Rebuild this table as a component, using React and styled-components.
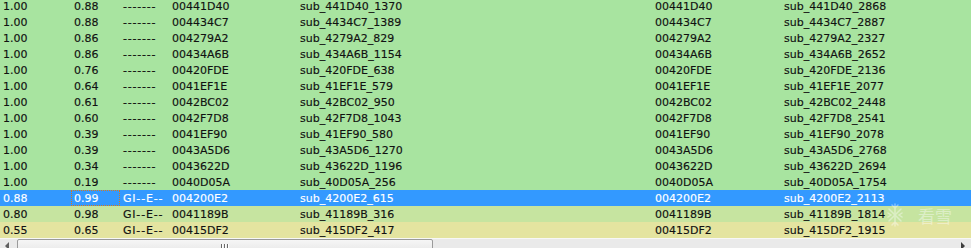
import React from 'react';
import styled, { createGlobalStyle } from 'styled-components';

const rows = [
  ['1.00', '0.88', '-------', '00441D40', 'sub_441D40_1370', 'sub_441D40_2868'],
  ['1.00', '0.88', '-------', '004434C7', 'sub_4434C7_1389', 'sub_4434C7_2887'],
  ['1.00', '0.86', '-------', '004279A2', 'sub_4279A2_829', 'sub_4279A2_2327'],
  ['1.00', '0.86', '-------', '00434A6B', 'sub_434A6B_1154', 'sub_434A6B_2652'],
  ['1.00', '0.76', '-------', '00420FDE', 'sub_420FDE_638', 'sub_420FDE_2136'],
  ['1.00', '0.64', '-------', '0041EF1E', 'sub_41EF1E_579', 'sub_41EF1E_2077'],
  ['1.00', '0.61', '-------', '0042BC02', 'sub_42BC02_950', 'sub_42BC02_2448'],
  ['1.00', '0.60', '-------', '0042F7D8', 'sub_42F7D8_1043', 'sub_42F7D8_2541'],
  ['1.00', '0.39', '-------', '0041EF90', 'sub_41EF90_580', 'sub_41EF90_2078'],
  ['1.00', '0.39', '-------', '0043A5D6', 'sub_43A5D6_1270', 'sub_43A5D6_2768'],
  ['1.00', '0.34', '-------', '0043622D', 'sub_43622D_1196', 'sub_43622D_2694'],
  ['1.00', '0.19', '-------', '0040D05A', 'sub_40D05A_256', 'sub_40D05A_1754'],
  ['0.88', '0.99', 'GI--E--', '004200E2', 'sub_4200E2_615', 'sub_4200E2_2113'],
  ['0.80', '0.98', 'GI--E--', '0041189B', 'sub_41189B_316', 'sub_41189B_1814'],
  ['0.55', '0.65', 'GI--E--', '00415DF2', 'sub_415DF2_417', 'sub_415DF2_1915'],
];

const SELECTED = 12;
const widths = [71, 49, 49, 128, 355, 129, 190];

// row tint follows the similarity value
const tint = (sim) => {
  if (sim >= 0.95) return '#a8e4a0';
  if (sim >= 0.7) return '#c6e4a0';
  return '#e4e4a0';
};

export default function App() {
  return (
    <>
      <GlobalStyle />
      <Frame>
        <Viewport>
          <List>
            {rows.map((r, i) => {
              const selected = i === SELECTED;
              const cells = [r[0], r[1], r[2], r[3], r[4], r[3], r[5]];
              return (
                <Row key={i} $bg={selected ? '#3399ff' : tint(parseFloat(r[0]))} $selected={selected}>
                  {cells.map((c, j) => (
                    <Cell key={j} $w={widths[j]} $wide={j === 2} $focus={selected && j === 1}>{c}</Cell>
                  ))}
                </Row>
              );
            })}
          </List>
          <Watermark>
            <svg width="16" height="26" viewBox="0 0 16 26">
              <g stroke="#fff" strokeWidth="1.5" strokeLinecap="round" fill="none">
                <path d="M8 2 V24" />
                <path d="M2 7 L14 19" />
                <path d="M14 7 L2 19" />
                <path d="M5 3 L8 6 L11 3" />
                <path d="M5 23 L8 20 L11 23" />
                <path d="M1 11 L4 13 L1 15" />
                <path d="M15 11 L12 13 L15 15" />
              </g>
            </svg>
            <span>看雪</span>
          </Watermark>
        </Viewport>
        <ScrollBar>
          <ArrowBtn>
            <svg width="5" height="8" viewBox="0 0 5 8"><path d="M4 0 L0 4 L4 8 Z" fill="#606060" /></svg>
          </ArrowBtn>
          <Thumb>
            <Grip><i /><i /><i /></Grip>
          </Thumb>
          <Track />
          <ArrowBtn>
            <svg width="5" height="8" viewBox="0 0 5 8"><path d="M0 0 L4 4 L0 8 Z" fill="#404040" /></svg>
          </ArrowBtn>
        </ScrollBar>
      </Frame>
    </>
  );
}

const GlobalStyle = createGlobalStyle`
  html, body { margin: 0; padding: 0; background: #f0f0f0; overflow: hidden; }
`;

const Frame = styled.div`
  width: 971px;
  height: 248px;
  display: flex;
  flex-direction: column;
  overflow: hidden;
  font-family: "DejaVu Sans", Verdana, sans-serif;
  font-size: 11px;
`;

const Viewport = styled.div`
  position: relative;
  height: 238px;
  flex: none;
  overflow: hidden;
  background: #fff;
`;

const List = styled.div`
  margin-top: -2px;
  display: flex;
  flex-direction: column;
`;

const Row = styled.div`
  display: flex;
  height: 16px;
  background: ${(p) => p.$bg};
  color: ${(p) => (p.$selected ? '#fff' : '#111')};
`;

const Cell = styled.div`
  flex: none;
  width: ${(p) => p.$w}px;
  box-sizing: border-box;
  padding-left: 3px;
  line-height: 18px;
  height: 16px;
  white-space: nowrap;
  overflow: hidden;
  letter-spacing: ${(p) => (p.$wide ? '0.8px' : 'normal')};
  -webkit-text-stroke: 0.15px currentColor;
  outline: ${(p) => (p.$focus ? '1px dotted #d67a1c' : 'none')};
  outline-offset: -1px;
`;

const Watermark = styled.div`
  position: absolute;
  left: 887px;
  top: 202px;
  display: flex;
  align-items: center;
  gap: 15px;
  opacity: 0.4;
  pointer-events: none;
  span {
    font-family: "Noto Sans CJK SC", sans-serif;
    font-size: 17px;
    color: #fff;
  }
`;

const ScrollBar = styled.div`
  flex: none;
  height: 17px;
  display: flex;
  background: #eaeaea;
  border-top: 1px solid #f7f7f7;
`;

const ArrowBtn = styled.div`
  width: 15px;
  flex: none;
  display: flex;
  justify-content: center;
  padding-top: 3px;
  box-sizing: border-box;
`;

const Thumb = styled.div`
  flex: none;
  width: 416px;
  margin-left: 2px;
  box-sizing: border-box;
  border: 1px solid #9a9a9a;
  border-radius: 2px;
  background: linear-gradient(#f6f6f6, #e4e4e4);
  display: flex;
  justify-content: center;
  padding-top: 4px;
`;

const Grip = styled.div`
  display: flex;
  gap: 1px;
  i {
    display: block;
    width: 1px;
    height: 7px;
    background: #6a6a6a;
    border-right: 1px solid #fff;
  }
`;

const Track = styled.div`
  flex: 1;
`;
